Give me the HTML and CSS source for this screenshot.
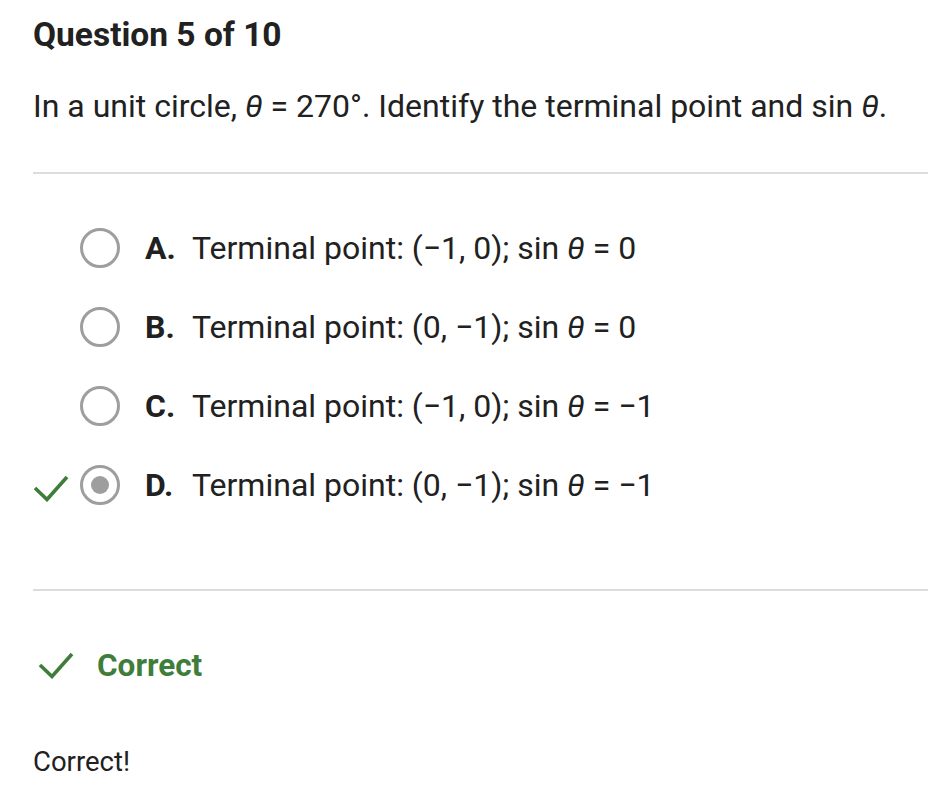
FILE: index.html
```html
<!DOCTYPE html>
<html>
<head>
<meta charset="utf-8">
<link rel="stylesheet" href="styles.css">
</head>
<body>
<div class="page">
  <h1 class="title">Question 5 of 10</h1>
  <p class="prompt">In a unit circle, <i class="var">θ</i> = 270°. Identify the terminal point and sin <i class="var">θ</i>.</p>
  <hr class="divider">
  <ul class="options">
    <li class="option">
      <span class="mark"></span>
      <span class="radio"></span>
      <span class="letter">A.</span>
      <span class="text">Terminal point: (−1, 0); sin <i class="var">θ</i> = 0</span>
    </li>
    <li class="option">
      <span class="mark"></span>
      <span class="radio"></span>
      <span class="letter">B.</span>
      <span class="text">Terminal point: (0, −1); sin <i class="var">θ</i> = 0</span>
    </li>
    <li class="option">
      <span class="mark"></span>
      <span class="radio"></span>
      <span class="letter">C.</span>
      <span class="text">Terminal point: (−1, 0); sin <i class="var">θ</i> = −1</span>
    </li>
    <li class="option">
      <span class="mark">
        <svg width="36" height="28" viewBox="0 0 36 28"><path d="M2 14 L14 25.5 L34 3" fill="none" stroke="#3f7d3a" stroke-width="3.6"/></svg>
      </span>
      <span class="radio selected"></span>
      <span class="letter">D.</span>
      <span class="text">Terminal point: (0, −1); sin <i class="var">θ</i> = −1</span>
    </li>
  </ul>
  <hr class="divider">
  <div class="result">
    <svg class="result-icon" width="36" height="28" viewBox="0 0 36 28"><path d="M2 14 L14 25.5 L34 3" fill="none" stroke="#3f7d3a" stroke-width="3.6"/></svg>
    <span class="result-label">Correct</span>
  </div>
  <p class="feedback">Correct!</p>
</div>
</body>
</html>
```

FILE: styles.css
```css
html, body {
  margin: 0;
  padding: 0;
  background: #ffffff;
}
body {
  font-family: Roboto, "Liberation Sans", sans-serif;
  color: #212121;
}
.page {
  padding-left: 33px;
}
.title {
  margin: 0;
  padding-top: 12px;
  font-size: 33.5px;
  font-weight: 700;
  line-height: 46px;
}
.prompt {
  margin: 0;
  padding-top: 28px;
  font-size: 32px;
  line-height: 40px;
}
.var {
  font-style: italic;
}
.divider {
  margin: 0;
  border: 0;
  height: 2px;
  background: #dcdcdc;
}
.prompt + .divider {
  margin-top: 46px;
}
.options {
  list-style: none;
  margin: 0;
  padding: 54px 0 84px 0;
  display: flex;
  flex-direction: column;
  gap: 39px;
}
.option {
  display: flex;
  align-items: center;
  height: 40px;
  font-size: 32px;
}
.mark {
  width: 47px;
  display: flex;
  align-items: center;
  padding-top: 6px;
}
.radio {
  width: 40px;
  height: 40px;
  box-sizing: border-box;
  border: 3.5px solid #9e9e9e;
  border-radius: 50%;
  display: flex;
  align-items: center;
  justify-content: center;
  flex-shrink: 0;
}
.radio.selected::after {
  content: "";
  width: 18px;
  height: 18px;
  border-radius: 50%;
  background: #9e9e9e;
}
.letter {
  font-weight: 700;
  margin-left: 25px;
  width: 47px;
}
.result {
  display: flex;
  align-items: center;
  margin-top: 54px;
  height: 40px;
}
.result-icon {
  margin-left: 5px;
}
.result-label {
  margin-left: 23px;
  font-size: 31.5px;
  font-weight: 700;
  color: #3f7d3a;
}
.feedback {
  margin: 0;
  padding-top: 57px;
  font-size: 27.5px;
  line-height: 40px;
}
```
